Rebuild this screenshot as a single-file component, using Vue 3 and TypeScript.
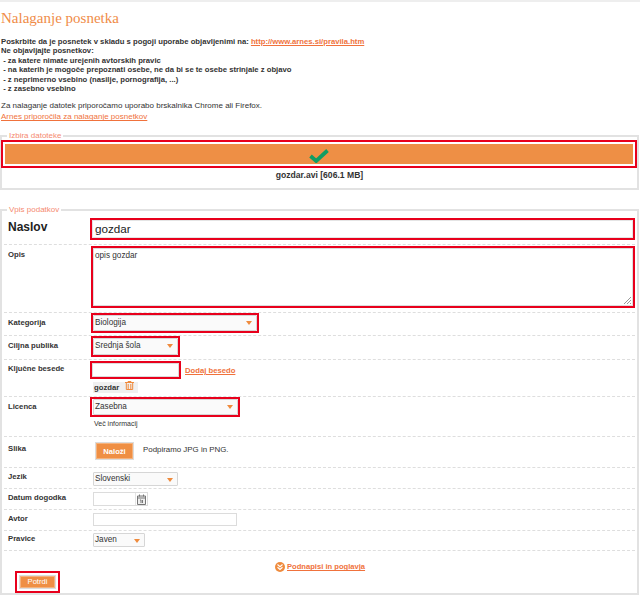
<script setup lang="ts">
const rules: string[] = [
  ' - za katere nimate urejenih avtorskih pravic',
  ' - na katerih je mogoče prepoznati osebe, ne da bi se te osebe strinjale z objavo',
  ' - z neprimerno vsebino (nasilje, pornografija, ...)',
  ' - z zasebno vsebino',
]
</script>

<template>
  <div class="page">
    <h1 class="title">Nalaganje posnetka</h1>
    <div class="intro">
      <div>Poskrbite da je posnetek v skladu s pogoji uporabe objavljenimi na: <a class="link">http://www.arnes.si/pravila.htm</a></div>
      <div>Ne objavljajte posnetkov:</div>
      <div v-for="r in rules" :key="r" class="rule">{{ r }}</div>
    </div>
    <p class="note">Za nalaganje datotek priporočamo uporabo brskalnika Chrome ali Firefox.</p>
    <a class="link rec">Arnes priporočila za nalaganje posnetkov</a>

    <fieldset class="box first">
      <legend>Izbira datoteke</legend>
      <div class="hl drop">
        <div class="bar">
          <svg class="check" width="20" height="14" viewBox="0 0 20 14"><path d="M1.5 7 L7.2 12 L18.5 1.5" fill="none" stroke="#0f9d63" stroke-width="3.8" /></svg>
        </div>
      </div>
      <div class="file">gozdar.avi [606.1 MB]</div>
    </fieldset>

    <fieldset class="box second">
      <legend>Vpis podatkov</legend>

      <div class="row r-title">
        <div class="label big">Naslov</div>
        <div class="hl title-input">gozdar</div>
      </div>
      <div class="row r-desc">
        <div class="label">Opis</div>
        <div class="hl area">
          opis gozdar
          <svg class="grip" width="7" height="7" viewBox="0 0 7 7"><path d="M0 7 L7 0 M3 7 L7 3 M6 7 L7 6" stroke="#999" stroke-width="1" /></svg>
        </div>
      </div>
      <div class="row r-kat">
        <div class="label">Kategorija</div>
        <div class="hl hl-kat"><div class="select">Biologija<span class="arrow"></span></div></div>
      </div>
      <div class="row r-cil">
        <div class="label">Ciljna publika</div>
        <div class="hl hl-cil"><div class="select">Srednja šola<span class="arrow"></span></div></div>
      </div>
      <div class="row r-key">
        <div class="label">Ključne besede</div>
        <div class="key-col">
          <div class="key-top">
            <div class="hl key-input"></div>
            <a class="link add">Dodaj besedo</a>
          </div>
          <div class="tag">
            <b>gozdar</b>
            <svg class="trash" width="9" height="9" viewBox="0 0 9 9"><path d="M0 1.5 H9 M3 1.5 V0.5 H6 V1.5 M1.3 2 V8.5 H7.7 V2 M3.2 3 V8 M5.8 3 V8" fill="none" stroke="#ef8b3d" stroke-width="1" /></svg>
          </div>
        </div>
      </div>
      <div class="row r-lic">
        <div class="label">Licenca</div>
        <div class="lic-col">
          <div class="hl hl-lic"><div class="select">Zasebna<span class="arrow"></span></div></div>
          <div class="more">Več informacij</div>
        </div>
      </div>
      <div class="row r-img">
        <div class="label">Slika</div>
        <div class="img-col">
          <button class="btn upload">Naloži</button>
          <span class="support">Podpiramo JPG in PNG.</span>
        </div>
      </div>
      <div class="row r-jez">
        <div class="label">Jezik</div>
        <div class="select plain w-jez">Slovenski<span class="arrow"></span></div>
      </div>
      <div class="row r-dat">
        <div class="label">Datum dogodka</div>
        <div class="date">
          <div class="date-input"></div>
          <svg class="cal" width="9" height="11" viewBox="0 0 9 11"><path d="M0.5 2 H8.5 V10.5 H0.5 Z M0.5 4 H8.5 M2.5 0.5 V2.5 M6.5 0.5 V2.5" fill="#eee" stroke="#777" stroke-width="1" /><path d="M3 6 H4 V9 M5.5 6 V9" fill="none" stroke="#777" stroke-width="1" /></svg>
        </div>
      </div>
      <div class="row r-avt">
        <div class="label">Avtor</div>
        <div class="author"></div>
      </div>
      <div class="row r-pra">
        <div class="label">Pravice</div>
        <div class="select plain w-pra">Javen<span class="arrow"></span></div>
      </div>

      <div class="subs">
        <span class="subs-icon">
          <svg width="10" height="10" viewBox="0 0 10 10"><path d="M2.5 2.5 L5 4.6 L7.5 2.5 M2.5 5.3 L5 7.4 L7.5 5.3" fill="none" stroke="#fff" stroke-width="1.2" /></svg>
        </span>
        <a class="link strong">Podnapisi in poglavja</a>
      </div>
      <div class="hl submit"><button class="btn confirm">Potrdi</button></div>
    </fieldset>
  </div>
</template>

<style scoped>
.page {
  width: 640px;
  height: 596px;
  box-sizing: border-box;
  border-top: 2px solid #eeeeee;
  overflow: hidden;
  font-family: "Liberation Sans", Arial, sans-serif;
  font-size: 8px;
  color: #333;
  background: #fff;
}
.title {
  margin: 8px 0 0 1px;
  font-family: "Liberation Serif", serif;
  font-size: 15px;
  font-weight: 400;
  line-height: 17px;
  color: #f08c48;
}
.intro {
  margin: 10px 0 0 1px;
  font-size: 7.7px;
  font-weight: 700;
  line-height: 9.4px;
}
.rule { white-space: pre; }
.link {
  color: #f0723c;
  text-decoration: underline;
}
.strong { font-weight: 700; font-size: 7.6px; }
.note {
  margin: 8px 0 0 1px;
  line-height: 10px;
}
.rec {
  display: block;
  margin: 0 0 0 1px;
  line-height: 11px;
}
.box {
  margin: 0;
  padding: 0;
  width: 639px;
  box-sizing: border-box;
  border: 2px solid #e2e2e2;
}
legend {
  margin-left: 5px;
  padding: 0 2px;
  font-size: 8px;
  line-height: 9px;
  color: #f58a70;
}
.first {
  margin-top: 9px;
  height: 59px;
}
.hl {
  box-sizing: border-box;
  border: 2px solid #e8001c;
}
.drop {
  margin: 0 0 0 -1px;
  height: 28px;
  padding: 2px;
  width: 636px;
}
.bar {
  height: 20px;
  background: #ee8f45;
  display: flex;
  align-items: center;
  justify-content: center;
}
.check { margin-top: 3px; }
.file {
  margin-top: 2px;
  text-align: center;
  font-size: 8.6px;
  font-weight: 700;
  line-height: 11px;
}
.second {
  margin-top: 15px;
  height: 390px;
  padding: 3px 0 0 2px;
}
.second legend { margin-left: 3px; }
.row {
  display: flex;
  box-sizing: border-box;
  border-bottom: 1px dashed #dedede;
  width: 631px;
}
.label {
  width: 87px;
  flex: none;
  padding-left: 4px;
  box-sizing: border-box;
  font-size: 7.7px;
  font-weight: 700;
  color: #333;
  line-height: 10px;
}
.big {
  font-size: 12px;
  line-height: 14px;
  color: #222;
  padding-top: 2px;
}
.r-title { height: 28px; padding-top: 1px; }
.title-input {
  width: 545px;
  height: 22px;
  margin-left: -1px;
  padding-left: 3px;
  font-size: 11.7px;
  line-height: 18px;
  color: #222;
  box-shadow: inset 0 0 0 1px #e4e4e4;
}
.r-desc { height: 68px; padding-top: 1px; }
.r-desc .label { padding-top: 4px; }
.area {
  position: relative;
  width: 544px;
  height: 62px;
  padding: 3px 2px;
  font-size: 8.2px;
  line-height: 10px;
  box-shadow: inset 0 0 0 1px #dcdcdc;
}
.grip { position: absolute; right: 2px; bottom: 2px; }
.r-kat { height: 23px; }
.r-kat .label { padding-top: 5px; }
.r-cil { height: 24px; }
.r-cil .label { padding-top: 5px; }
.select {
  position: relative;
  box-sizing: border-box;
  height: 16px;
  padding-left: 1px;
  border: 1px solid #d6d6d6;
  border-radius: 1px;
  background: #fafafa;
  font-size: 8.2px;
  line-height: 14px;
  color: #333;
}
.arrow {
  position: absolute;
  right: 4px;
  top: 5px;
  width: 0;
  height: 0;
  border-left: 3px solid transparent;
  border-right: 3px solid transparent;
  border-top: 4px solid #ef8b3d;
}
.hl-kat { width: 168px; height: 20px; }
.hl-cil { width: 89px; height: 21px; }
.hl-cil .select { height: 17px; }
.plain { height: 14px; line-height: 12px; margin-left: 2px; }
.w-jez { width: 85px; margin-top: 4px; }
.w-pra { width: 52px; margin-top: 2px; }
.r-key { height: 37px; padding-top: 1px; }
.r-key .label { padding-top: 3px; }
.key-col { margin-left: -1px; }
.key-top { display: flex; align-items: center; }
.key-input {
  width: 91px;
  height: 18px;
  box-shadow: inset 0 0 0 1px #dcdcdc;
}
.add { margin-left: 4px; font-size: 7.7px; font-weight: 700; }
.tag {
  display: flex;
  align-items: flex-start;
  gap: 6px;
  margin: 3px 0 0 3px;
  width: 45px;
  height: 11px;
  padding-left: 1px;
  box-sizing: border-box;
  background: #f0f0f0;
  font-size: 7.7px;
  line-height: 12px;
}
.trash { margin-top: -1px; }
.r-lic { height: 40px; }
.r-lic .label { padding-top: 5px; }
.lic-col { margin-left: -1px; }
.hl-lic { width: 150px; height: 20px; padding-left: 1px; }
.hl-lic .select { width: 145px; height: 16px; }
.more {
  margin: 2px 0 0 4px;
  font-size: 7px;
  line-height: 10px;
}
.r-img { height: 31px; padding-top: 5px; }
.r-img .label { padding-top: 2px; }
.img-col {
  display: flex;
  align-items: flex-start;
  margin-left: 4px;
}
.btn {
  border: 1px solid #dcdcdc;
  background: #ef8f44;
  color: #fff;
  font: 700 7.6px "Liberation Sans", Arial, sans-serif;
  padding: 0;
  box-shadow: inset 0 0 0 1px #f5b27c;
}
.upload { width: 39px; height: 18px; }
.support { margin: 3px 0 0 9px; font-size: 7.9px; line-height: 10px; }
.r-jez, .r-dat, .r-avt { height: 21px; }
.r-pra { height: 20px; }
.r-jez .label { padding-top: 4px; }
.r-dat .label, .r-avt .label { padding-top: 4px; }
.r-pra .label { padding-top: 3px; }
.date {
  display: flex;
  align-items: center;
  margin: 3px 0 0 2px;
  width: 55px;
  height: 14px;
  box-sizing: border-box;
  border: 1px solid #dcdcdc;
}
.date-input { flex: 1; height: 100%; border-right: 1px solid #e4e4e4; }
.cal { margin: 0 1px; flex: none; }
.author {
  margin: 3px 0 0 2px;
  width: 144px;
  height: 13px;
  box-sizing: border-box;
  border: 1px solid #dcdcdc;
}
.subs {
  display: flex;
  align-items: center;
  gap: 2px;
  margin: 11px 0 0 271px;
  height: 10px;
  line-height: 10px;
}
.subs-icon {
  display: flex;
  align-items: center;
  justify-content: center;
  width: 10px;
  height: 10px;
  border-radius: 50%;
  background: #ef8b3d;
}
.submit {
  margin: -1px 0 0 11px;
  width: 45px;
  height: 22px;
  padding: 2px;
}
.confirm {
  display: block;
  width: 37px;
  height: 14px;
  font-weight: 400;
  line-height: 12px;
}
</style>

<style>
html, body { margin: 0; background: #fff; }
</style>
